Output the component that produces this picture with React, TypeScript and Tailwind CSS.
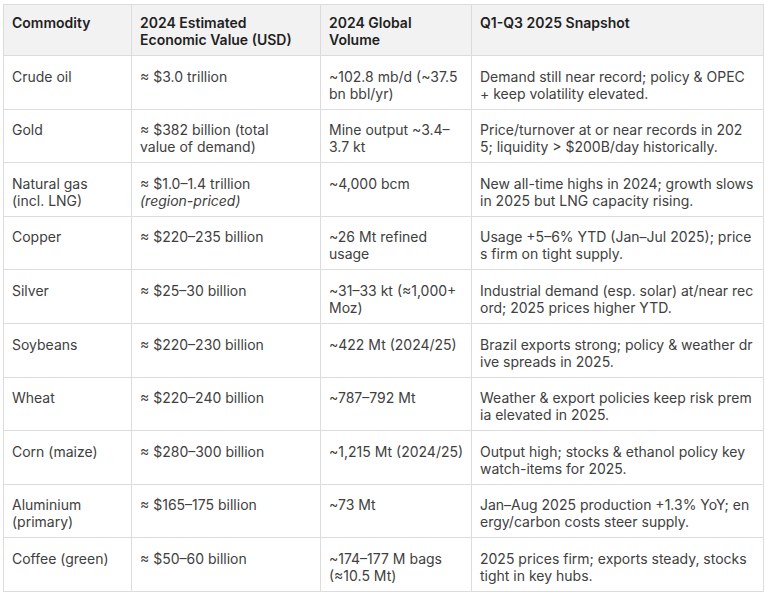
import React from "react";

// each cell is a list of lines, wrapped the way the source table wraps them
type Row = {
  name: string[];
  value: string[];
  note?: string;
  volume: string[];
  snapshot: string[];
};

const rows: Row[] = [
  {
    name: ["Crude oil"],
    value: ["≈ $3.0 trillion"],
    volume: ["~102.8 mb/d (~37.5", "bn bbl/yr)"],
    snapshot: ["Demand still near record; policy & OPEC", "+ keep volatility elevated."],
  },
  {
    name: ["Gold"],
    value: ["≈ $382 billion (total", "value of demand)"],
    volume: ["Mine output ~3.4–", "3.7 kt"],
    snapshot: ["Price/turnover at or near records in 202", "5; liquidity > $200B/day historically."],
  },
  {
    name: ["Natural gas", "(incl. LNG)"],
    value: ["≈ $1.0–1.4 trillion"],
    note: "(region-priced)",
    volume: ["~4,000 bcm"],
    snapshot: ["New all-time highs in 2024; growth slows", "in 2025 but LNG capacity rising."],
  },
  {
    name: ["Copper"],
    value: ["≈ $220–235 billion"],
    volume: ["~26 Mt refined", "usage"],
    snapshot: ["Usage +5–6% YTD (Jan–Jul 2025); price", "s firm on tight supply."],
  },
  {
    name: ["Silver"],
    value: ["≈ $25–30 billion"],
    volume: ["~31–33 kt (≈1,000+", "Moz)"],
    snapshot: ["Industrial demand (esp. solar) at/near rec", "ord; 2025 prices higher YTD."],
  },
  {
    name: ["Soybeans"],
    value: ["≈ $220–230 billion"],
    volume: ["~422 Mt (2024/25)"],
    snapshot: ["Brazil exports strong; policy & weather dr", "ive spreads in 2025."],
  },
  {
    name: ["Wheat"],
    value: ["≈ $220–240 billion"],
    volume: ["~787–792 Mt"],
    snapshot: ["Weather & export policies keep risk prem", "ia elevated in 2025."],
  },
  {
    name: ["Corn (maize)"],
    value: ["≈ $280–300 billion"],
    volume: ["~1,215 Mt (2024/25)"],
    snapshot: ["Output high; stocks & ethanol policy key", "watch-items for 2025."],
  },
  {
    name: ["Aluminium", "(primary)"],
    value: ["≈ $165–175 billion"],
    volume: ["~73 Mt"],
    snapshot: ["Jan–Aug 2025 production +1.3% YoY; en", "ergy/carbon costs steer supply."],
  },
  {
    name: ["Coffee (green)"],
    value: ["≈ $50–60 billion"],
    volume: ["~174–177 M bags", "(≈10.5 Mt)"],
    snapshot: ["2025 prices firm; exports steady, stocks", "tight in key hubs."],
  },
];

const th = "border border-[#dcdcdc] px-[8px] pt-[9px] pb-[7px] text-left align-top font-semibold text-[#1f1f1f]";
const td = "border border-[#dcdcdc] px-[8px] pt-[11.6px] pb-[7px] align-top h-[53.6px] whitespace-nowrap";

const Lines = ({ lines }: { lines: string[] }) => (
  <>
    {lines.map((l, i) => (
      <div key={i}>{l}</div>
    ))}
  </>
);

export default function App() {
  return (
    <div className="bg-white w-[767px] h-[600px] pt-[4px] pl-[3px] font-['Inter',sans-serif] text-[14px] leading-[17px] text-[#404040]">
      <table className="border-collapse table-fixed w-[760px]">
        <colgroup>
          <col className="w-[128px]" />
          <col className="w-[189px]" />
          <col className="w-[151px]" />
          <col className="w-[292px]" />
        </colgroup>
        <thead>
          <tr className="bg-[#f2f2f2]">
            <th className={th}>Commodity</th>
            <th className={th}>
              2024 Estimated
              <br />
              Economic Value (USD)
            </th>
            <th className={th}>
              2024 Global
              <br />
              Volume
            </th>
            <th className={th}>Q1-Q3 2025 Snapshot</th>
          </tr>
        </thead>
        <tbody>
          {rows.map((r) => (
            <tr key={r.name.join(" ")}>
              <td className={td}>
                <Lines lines={r.name} />
              </td>
              <td className={td}>
                <Lines lines={r.value} />
                {r.note && <div className="italic">{r.note}</div>}
              </td>
              <td className={td}>
                <Lines lines={r.volume} />
              </td>
              <td className={td}>
                <Lines lines={r.snapshot} />
              </td>
            </tr>
          ))}
        </tbody>
      </table>
    </div>
  );
}
